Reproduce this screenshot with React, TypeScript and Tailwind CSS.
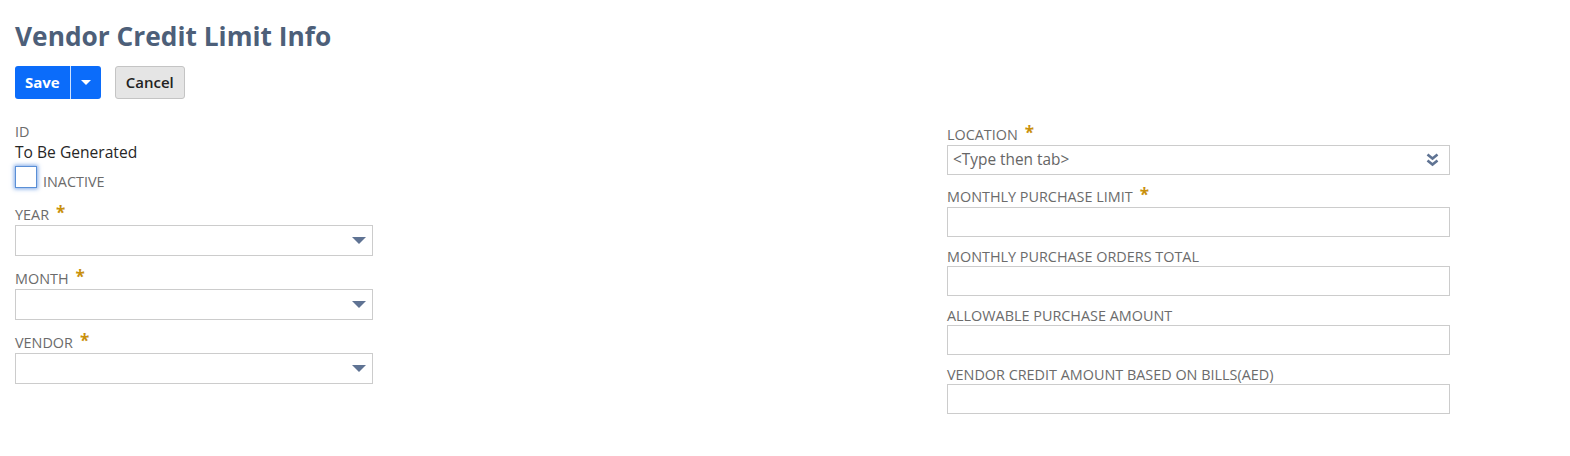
import React from 'react';

const font = { fontFamily: '"Open Sans", "Liberation Sans", sans-serif' };

const Caret = () => (
  <svg width="14" height="7" viewBox="0 0 14 7" className="shrink-0">
    <path d="M0 0 H14 L7 7 Z" fill="#5f7393" />
  </svg>
);

const DoubleChevron = () => (
  <svg width="13" height="14" viewBox="0 0 13 14" className="shrink-0">
    <path d="M1.5 1.5 L6.5 5.5 L11.5 1.5" stroke="#5f7393" strokeWidth="2.6" fill="none" strokeLinejoin="miter" />
    <path d="M1.5 7.5 L6.5 11.5 L11.5 7.5" stroke="#5f7393" strokeWidth="2.6" fill="none" strokeLinejoin="miter" />
  </svg>
);

const Label: React.FC<{ text: string; required?: boolean }> = ({ text, required }) =>
  required ? (
    <div className="h-[19px] mb-[1px] flex items-center text-[14.4px] leading-[19px] uppercase text-[#6b6b6b]">
      {text}
      <span className="ml-[7px] text-[#c9900c] text-[17px] font-bold leading-[19px] relative top-[-2px]">*</span>
    </div>
  ) : (
    <div className="h-[16px] mb-[1px] text-[14.4px] leading-[16px] uppercase text-[#6b6b6b]">{text}</div>
  );

const SelectField: React.FC<{ label: string }> = ({ label }) => (
  <div className="mb-[13px]">
    <Label text={label} required />
    <div className="h-[31px] border border-[#cccccc] bg-white flex items-center justify-end pr-[6px]">
      <Caret />
    </div>
  </div>
);

const TextField: React.FC<{ label: string; required?: boolean }> = ({ label, required }) => (
  <div className="mb-[12px]">
    <Label text={label} required={required} />
    <div className="h-[30px] border border-[#cccccc] bg-white" />
  </div>
);

export default function App() {
  return (
    <div className="w-[1570px] h-[456px] bg-white px-[15px] pt-[20px]" style={font}>
      <h1 className="text-[26.3px] leading-[32px] font-bold text-[#4d5f79]">Vendor Credit Limit Info</h1>

      <div className="flex items-center gap-[14px] mt-[14px]">
        <div className="flex h-[33px] rounded-[3px] bg-[#0b6cfa] text-white overflow-hidden">
          <button className="px-[10px] text-[15px] font-bold leading-[33px]">Save</button>
          <div className="w-px bg-white/80" />
          <button className="w-[30px] flex items-center justify-center">
            <svg width="10" height="5" viewBox="0 0 10 5">
              <path d="M0 0 H10 L5 5 Z" fill="#ffffff" />
            </svg>
          </button>
        </div>
        <button className="h-[33px] px-[10px] rounded-[3px] bg-[#e5e5e5] border border-[#c4c4c4] text-[15px] font-semibold text-[#222222] leading-[31px]">
          Cancel
        </button>
      </div>

      <div className="grid grid-cols-[358px_503px] gap-x-[574px] mt-[25px]">
        <div>
          <div className="h-[16px] text-[14.4px] leading-[16px] uppercase text-[#6b6b6b]">ID</div>
          <div className="mt-[2px] text-[15.6px] leading-[20px] text-[#262626]">To Be Generated</div>
          <div className="flex items-end mt-[4px] mb-[17px]">
            <div className="w-[22px] h-[22px] border border-[#5a8fd6] bg-white shadow-[0_0_4px_1px_rgba(70,130,220,0.7)]" />
            <span className="ml-[6px] text-[14.4px] leading-[16px] uppercase text-[#6b6b6b] relative top-[2px]">Inactive</span>
          </div>
          <SelectField label="Year" />
          <SelectField label="Month" />
          <SelectField label="Vendor" />
        </div>

        <div className="pt-[1px]">
          <div className="mb-[12px]">
            <Label text="Location" required />
            <div className="h-[30px] border border-[#cccccc] bg-white flex items-center justify-between pl-[5px] pr-[10px]">
              <span className="text-[15.4px] text-[#666666]">&lt;Type then tab&gt;</span>
              <DoubleChevron />
            </div>
          </div>
          <TextField label="Monthly Purchase Limit" required />
          <TextField label="Monthly Purchase Orders Total" />
          <TextField label="Allowable Purchase Amount" />
          <TextField label="Vendor Credit Amount Based On Bills(AED)" />
        </div>
      </div>
    </div>
  );
}
